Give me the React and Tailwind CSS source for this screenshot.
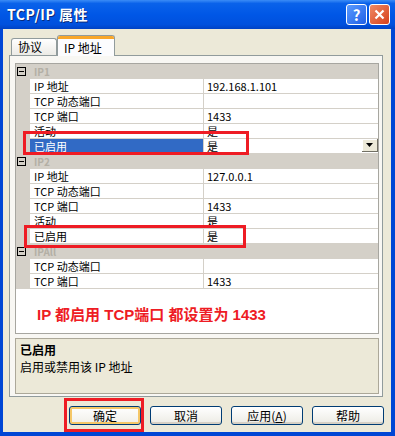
const cjk = "font-['Noto_Sans_CJK_SC',sans-serif]";

const MinusBox = () => (
    <div className="ml-[1px] flex h-[9px] w-[9px] items-center justify-center border border-black">
        <div className="h-px w-[5px] bg-black" />
    </div>
);

const Header = ({ label }) => (
    <div className="flex h-[15px] items-center bg-[#d4d0c8]">
        <div className="flex w-[14px] items-center">
            <MinusBox />
        </div>
        <span className="ml-[4px] text-[10px] font-bold leading-[10px] text-[#b3afa5]">{label}</span>
    </div>
);

const Row = ({ name, value, selected, dropdown }) => (
    <div className="flex h-[15px] text-[11px] leading-[14px]">
        <div className="w-[14px] bg-[#d4d0c8]" />
        <div
            className={
                selected
                    ? "w-[174px] border-b border-r border-[#d4d0c8] bg-[#316ac5] pl-[4px] text-white"
                    : "w-[174px] border-b border-r border-[#d4d0c8] bg-white pl-[4px] text-black"
            }
        >
            {name}
        </div>
        <div className="flex flex-1 items-start justify-between border-b border-[#d4d0c8] bg-white pl-[3px] text-black">
            <span>{value}</span>
            {dropdown && (
                <div className="flex h-[13px] w-[16px] items-center justify-center border-b border-r border-[#716f64] bg-[#ece9d8] shadow-[inset_1px_1px_0_#ffffff]">
                    <svg width="7" height="4" viewBox="0 0 7 4">
                        <path d="M0 0h7L3.5 4z" fill="#000" />
                    </svg>
                </div>
            )}
        </div>
    </div>
);

const XpButton = ({ children, focused }) => (
    <div
        className={
            focused
                ? "flex h-[19px] w-[72px] items-center justify-center rounded-[3px] border border-[#003c74] bg-gradient-to-b from-white to-[#f0efe8] text-[12px] leading-none text-black shadow-[inset_0_0_0_2px_#f5c767]"
                : "flex h-[19px] w-[72px] items-center justify-center rounded-[3px] border border-[#003c74] bg-gradient-to-b from-white to-[#ecebe4] text-[12px] leading-none text-black shadow-[inset_0_-2px_0_#d6d0c5]"
        }
    >
        {children}
    </div>
);

export default function App() {
    return (
        <div className={`relative flex h-[436px] w-[395px] flex-col bg-[#0046d5] ${cjk}`}>
            {/* title bar */}
            <div className="flex h-[29px] items-center justify-between bg-[linear-gradient(180deg,#3b8cf6_0%,#0a62ea_12%,#0057e6_50%,#0050dd_85%,#0042c4_100%)] pl-[7px] pr-[5px]">
                <span className="text-[14px] font-bold tracking-[0.5px] text-white [text-shadow:1px_1px_0_#0a2a7a]">TCP/IP 属性</span>
                <div className="flex gap-[2px]">
                    <div className="flex h-[21px] w-[21px] items-center justify-center rounded-[3px] border border-white bg-[linear-gradient(135deg,#5a9bff,#1f5fe6)] text-[15px] font-bold leading-none text-white">
                        ?
                    </div>
                    <div className="flex h-[21px] w-[21px] items-center justify-center rounded-[3px] border border-white bg-[linear-gradient(135deg,#f08a64,#d6401c)]">
                        <svg width="11" height="11" viewBox="0 0 11 11">
                            <path d="M1.5 1.5l8 8M9.5 1.5l-8 8" stroke="#fff" strokeWidth="2.2" />
                        </svg>
                    </div>
                </div>
            </div>

            {/* body */}
            <div className="ml-[3px] mr-[4px] mb-[4px] flex flex-1 flex-col bg-[#ece9d8]">
                {/* tabs */}
                <div className="flex h-[26px] items-end pl-[8px]">
                    <div className="flex h-[17px] w-[46px] items-center rounded-t-[3px] border border-b-0 border-[#919b9c] bg-gradient-to-b from-white to-[#ecebe6] pl-[6px] text-[12px] leading-none text-black">
                        协议
                    </div>
                    <div className="relative z-10 -mb-px flex h-[21px] w-[58px] flex-col rounded-t-[3px] border border-b-0 border-[#919b9c] bg-[#fcfcfe]">
                        <div className="h-[3px] rounded-t-[2px] bg-[#f9a72a]" />
                        <div className="flex flex-1 items-center pl-[6px] text-[12px] leading-none text-black">IP 地址</div>
                    </div>
                </div>

                {/* panel */}
                <div className="ml-[6px] flex h-[342px] w-[374px] flex-col gap-[4px] border border-[#919b9c] bg-[#f8f7f3] pb-[2px] pl-[5px] pr-[3px] pt-[7px]">
                    {/* property grid */}
                    <div className="flex h-[271px] flex-col border border-[#a7a6a0] bg-white">
                        <Header label="IP1" />
                        <Row name="IP 地址" value="192.168.1.101" />
                        <Row name="TCP 动态端口" value="" />
                        <Row name="TCP 端口" value="1433" />
                        <Row name="活动" value="是" />
                        <Row name="已启用" value="是" selected dropdown />
                        <Header label="IP2" />
                        <Row name="IP 地址" value="127.0.0.1" />
                        <Row name="TCP 动态端口" value="" />
                        <Row name="TCP 端口" value="1433" />
                        <Row name="活动" value="是" />
                        <Row name="已启用" value="是" />
                        <Header label="IPAll" />
                        <Row name="TCP 动态端口" value="" />
                        <Row name="TCP 端口" value="1433" />
                        <div className="flex flex-1 items-start pl-[21px] pt-[18px]">
                            <span className="font-['Liberation_Sans','Noto_Sans_CJK_SC',sans-serif] text-[15px] font-bold leading-none text-[#ee1c24]">
                                IP 都启用 TCP端口 都设置为 1433
                            </span>
                        </div>
                    </div>

                    {/* description */}
                    <div className="flex flex-1 flex-col border border-[#aca899] bg-[#ece9d8] pl-[4px] pt-[2px] text-[12px] leading-[17px] text-black">
                        <span className="font-bold">已启用</span>
                        <span>启用或禁用该 IP 地址</span>
                    </div>
                </div>

                {/* buttons */}
                <div className="mt-[9px] flex gap-[9px] pl-[66px]">
                    <XpButton focused>确定</XpButton>
                    <XpButton>取消</XpButton>
                    <XpButton>
                        应用(<span className="underline">A</span>)
                    </XpButton>
                    <XpButton>帮助</XpButton>
                </div>
            </div>

            {/* red annotation boxes */}
            <div className="absolute left-[23px] top-[131px] h-[24px] w-[226px] border-[3px] border-[#ee1c24]" />
            <div className="absolute left-[24px] top-[225px] h-[23px] w-[222px] border-[3px] border-[#ee1c24]" />
            <div className="absolute left-[64px] top-[398px] h-[34px] w-[80px] border-[3px] border-[#ee1c24]" />
        </div>
    );
}
